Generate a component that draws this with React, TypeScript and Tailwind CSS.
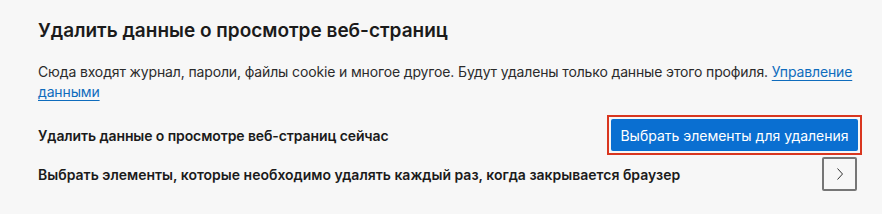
export default function App() {
  return (
    <div className="w-[882px] h-[214px] bg-[#f7f7f7] text-[#1b1b1b] font-['Inter','Noto_Sans',sans-serif] pl-[38px] pr-[24px] pt-[17px]">
      <h1 className="text-[19px] leading-[28px] font-semibold">
        Удалить данные о просмотре веб-страниц
      </h1>
      <p className="mt-[17px] text-[14px] leading-[20px] text-[#2b2b2b] tracking-[-0.14px]">
        Сюда входят журнал, пароли, файлы cookie и многое другое. Будут удалены только данные этого профиля.{' '}
        <a href="#" className="text-[#0f6cbd] underline underline-offset-[3px]">
          Управление данными
        </a>
      </p>
      <div className="mt-[13px] flex items-center justify-between">
        <span className="text-[14px] font-semibold tracking-[-0.1px]">Удалить данные о просмотре веб-страниц сейчас</span>
        <span className="-mr-[4px] border-2 border-[#d9361f] p-[2px] flex">
          <button className="h-[32px] w-[247px] rounded-[2px] bg-[#0a6fd1] text-white text-[14px]">
            Выбрать элементы для удаления
          </button>
        </span>
      </div>
      <div className="mt-[2px] flex items-center justify-between">
        <span className="text-[14px] font-semibold">
          Выбрать элементы, которые необходимо удалять каждый раз, когда закрывается браузер
        </span>
        <button className="w-[35px] h-[34px] mr-[1px] border-2 border-[#767676] rounded-[2px] flex items-center justify-center">
          <svg width="10" height="14" viewBox="0 0 10 14" fill="none">
            <path d="M2.5 1.5 L7.5 7 L2.5 12.5" stroke="#333" strokeWidth="1" />
          </svg>
        </button>
      </div>
    </div>
  );
}
